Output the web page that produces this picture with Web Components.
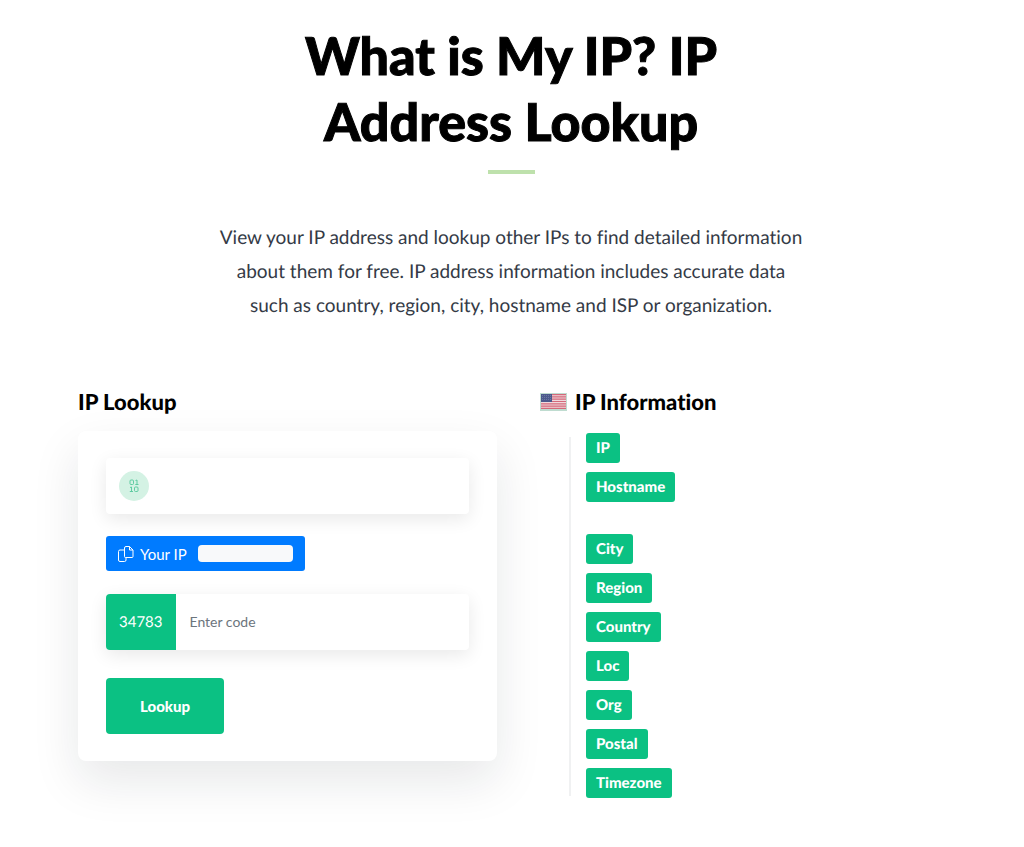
<!DOCTYPE html>
<html lang="en">
<head>
<meta charset="utf-8">
<meta name="viewport" content="width=device-width, initial-scale=1">
<title>What is My IP? IP Address Lookup</title>
<style>
  body { margin: 0; background: #fff; color: #000; font-family: Lato, "Open Sans", sans-serif; font-size: 15px;
    font-variant-ligatures: none; text-rendering: geometricPrecision; --green: #0bc183; --blue: #007bff; }
</style>
</head>
<body>
<ip-page></ip-page>
<script>
const define = (name, html, setup) => {
  const template = document.createElement('template');
  template.innerHTML = html;
  customElements.define(name, class extends HTMLElement {
    constructor() {
      super();
      this.attachShadow({ mode: 'open' }).append(template.content.cloneNode(true));
    }
    connectedCallback() { if (setup) setup(this, this.shadowRoot); }
  });
};

define('page-intro', `
<style>
  :host { display: block; text-align: center; }
  h1 { max-width: 576px; margin: 0 auto; font-size: 52px; line-height: 66px; font-weight: 900; -webkit-text-stroke: 1px currentColor; }
  hr { width: 47px; height: 4px; margin: 15px auto 47px; border: 0; background: #bee1ac; }
  p { max-width: 600px; margin: 0 auto; font-size: 19px; line-height: 34px; color: #343a46; }
</style>
<h1><slot name="title"></slot></h1>
<hr>
<p><slot></slot></p>`);

define('section-title', `
<style>
  :host { display: block; }
  h2 { display: flex; align-items: center; gap: 8px; margin: 0; font-size: 22px; line-height: 28px; font-weight: 900; }
</style>
<h2><slot name="icon"></slot><slot></slot></h2>`);

define('us-flag', `
<style>
  :host { display: block; width: 27px; height: 18px; }
  svg { display: block; width: 100%; height: 100%; }
</style>
<svg viewBox="0 0 27 18" role="img" aria-label="United States">
  <rect width="27" height="18" fill="#bfdcd0"/>
  <rect x="1" y="1" width="25" height="15" fill="#f0d9dd"/>
  <path d="M1 1.6h25M1 3.9h25M1 6.2h25M1 8.5h25M1 10.8h25M1 13.1h25M1 15.4h25" stroke="#d4697a" stroke-width="1.2"/>
  <rect x="1" y="1" width="11" height="8" fill="#4c5a8c"/>
  <path d="M2 2.5h9M2 4.5h9M2 6.5h9" stroke="#7885ad" stroke-width=".7" stroke-dasharray="1 1"/>
</svg>`);

define('ip-field', `
<style>
  :host { display: flex; height: 56px; border-radius: 4px; background: #fff; box-shadow: 0 5px 18px rgba(0,0,0,.09); }
  ::slotted([slot="prefix"]) { flex: none; }
  input { flex: 1; min-width: 0; padding: 0 14px; border: 0; border-radius: 4px; outline: 0; background: none; font: 14px/20px Lato, sans-serif; color: #495057; }
  input::placeholder { color: #6c757d; opacity: 1; }
</style>
<slot name="prefix"></slot>
<input type="text">`, (host, root) => {
  const input = root.querySelector('input');
  input.placeholder = host.getAttribute('placeholder') || '';
  input.setAttribute('aria-label', host.getAttribute('label'));
});

define('binary-icon', `
<style>
  :host { display: block; width: 30px; height: 30px; margin: 13px 0 13px 13px; border-radius: 50%; background: #d4f2e4; }
  svg { display: block; }
</style>
<svg width="30" height="30" viewBox="0 0 30 30" fill="none" stroke="#52c79b" stroke-width=".9" aria-hidden="true">
  <rect x="11" y="9" width="3.5" height="4.5" rx="1"/>
  <path d="M16.5 9.5 18 9v4.5M16.3 13.5h3.2M11 16.5l1.5-.5v4.5M10.8 20.5H14"/>
  <rect x="15.5" y="16" width="3.5" height="4.5" rx="1"/>
</svg>`);

define('code-badge', `
<style>
  :host { display: flex; align-items: center; padding: 0 13px; border-radius: 4px 0 0 4px; background: var(--green); color: #fff; font-size: 15px; line-height: 24px; }
</style>
<slot></slot>`);

define('your-ip', `
<style>
  :host { display: block; }
  button { display: flex; align-items: center; height: 35px; padding: 0 12px; border: 0; border-radius: 3px; background: var(--blue); color: #fff; font: 15px/24px Lato, sans-serif; }
  svg { flex: none; margin-right: 6px; }
  .value { width: 95px; height: 17px; margin-left: 11px; border-radius: 4px; background: #f8f9fa; }
</style>
<button type="button">
  <svg width="16" height="16" viewBox="0 0 16 16" fill="none" stroke="#fff" stroke-linejoin="round" aria-hidden="true">
    <path d="M6.5 2A1.5 1.5 0 0 1 8 .5h3.5L15 4v6.500a1 1 0 0 1-1 1H7.500a1 1 0 0 1-1-1zM11.500.5V4H15M6.500 4H2A1.500 1.500 0 0 0 .5 5.500V14A1.500 1.500 0 0 0 2 15.500h4.500A1.500 1.500 0 0 0 8 14v-2.500"/>
  </svg>
  <slot></slot><span class="value"></span>
</button>`);

define('lookup-button', `
<style>
  :host { display: block; }
  button { height: 56px; padding: 0 34px; border: 0; border-radius: 4px; background: var(--green); color: #fff; font: 900 15px/24px Lato, sans-serif; }
</style>
<button type="button"><slot></slot></button>`);

define('lookup-card', `
<style>
  :host { display: flex; flex-direction: column; padding: 27px 28px; border-radius: 8px; background: #fff; box-shadow: 0 20px 48px rgba(20,25,40,.1); }
  your-ip { margin: 22px 0 23px; }
  lookup-button { margin-top: 28px; }
</style>
<ip-field label="IP address"><binary-icon slot="prefix"></binary-icon></ip-field>
<your-ip>Your IP</your-ip>
<ip-field label="Code" placeholder="Enter code"><code-badge slot="prefix">34783</code-badge></ip-field>
<lookup-button>Lookup</lookup-button>`);

define('info-item', `
<style>
  :host { display: flex; }
  span { padding: 3px 10px; border-radius: 3px; background: var(--green); color: #fff; font-size: 15px; line-height: 24px; font-weight: 900; }
</style>
<span><slot></slot></span>`);

define('info-list', `
<style>
  :host { position: relative; display: flex; flex-direction: column; gap: 9px; margin-left: 29px; padding-left: 17px; }
  :host::before { content: ""; position: absolute; left: 0; top: 4px; bottom: 2px; width: 2px; background: #f0f1f2; }
  .wide { margin-bottom: 23px; }
</style>
<info-item>IP</info-item>
<info-item class="wide">Hostname</info-item>
<info-item>City</info-item>
<info-item>Region</info-item>
<info-item>Country</info-item>
<info-item>Loc</info-item>
<info-item>Org</info-item>
<info-item>Postal</info-item>
<info-item>Timezone</info-item>`);

define('ip-page', `
<style>
  :host { display: block; padding: 23px 80px 48px 78px; }
  .columns { display: grid; grid-template-columns: 419fr 404fr; column-gap: 43px; align-items: start; margin-top: 65px; }
  lookup-card { margin-top: 15px; }
  info-list { margin-top: 17px; }
</style>
<main>
  <page-intro>
    <span slot="title">What is My IP? IP Address Lookup</span>
    View your IP address and lookup other IPs to find detailed information<br>
    about them for free. IP address information includes accurate data<br>
    such as country, region, city, hostname and ISP or organization.
  </page-intro>
  <div class="columns">
    <section><section-title>IP Lookup</section-title><lookup-card></lookup-card></section>
    <section><section-title><us-flag slot="icon"></us-flag>IP Information</section-title><info-list></info-list></section>
  </div>
</main>`);
</script>
</body>
</html>
